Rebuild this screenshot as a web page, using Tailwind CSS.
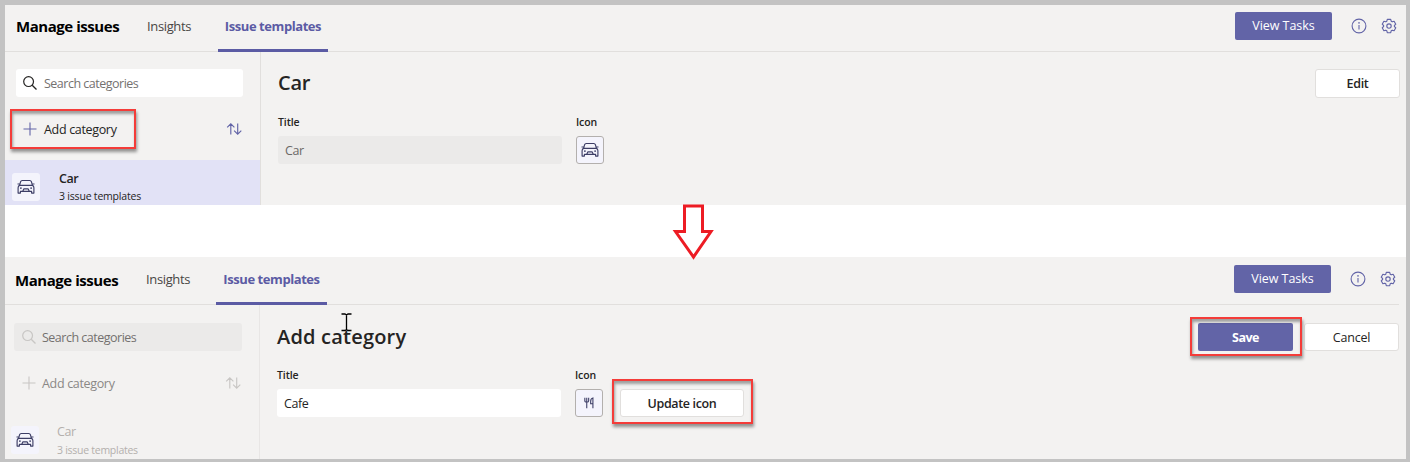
<!DOCTYPE html>
<html lang="en">
<head>
<meta charset="utf-8">
<title>Manage issues</title>
<script src="https://cdn.jsdelivr.net/npm/@tailwindcss/browser@4"></script>
</head>
<body class="relative w-[1410px] h-[462px] overflow-hidden bg-[#c3c3c3] pt-[5px] pl-[5px] font-['Open_Sans',sans-serif] text-[12.5px] text-[#252423] whitespace-nowrap">
<svg class="hidden">
  <symbol id="search" viewBox="0 0 14 14"><circle cx="5.6" cy="5.6" r="4.9" fill="none" stroke="currentColor" stroke-width="1.2"/><path d="M9.2 9.2l4.3 4.3" stroke="currentColor" stroke-width="1.3"/></symbol>
  <symbol id="plus" viewBox="0 0 14 14"><path d="M7 .5v13M.5 7h13" stroke="currentColor" stroke-width="1.1"/></symbol>
  <symbol id="sort" viewBox="0 0 16 12"><path d="M4.8 11.5V1M1.2 4.4L4.8.9l3.6 3.5M11.7.5V11M8.1 7.6l3.6 3.5 3.6-3.5" fill="none" stroke="currentColor" stroke-width="1.15"/></symbol>
  <symbol id="car" viewBox="0 0 18 16"><g fill="none" stroke="currentColor" stroke-width="1.15" stroke-linejoin="round"><path d="M2.6 6.3L3.6 2.7Q4 1.500 5.200 1.500h7.600q1.200 0 1.600 1.200l1 3.600M.5 5h2M15.500 5h2M2.600 6.400h12.800q1.500.6 1.500 2.400v5.300h-2.300v-1.700H3.400v1.700H1.100V8.800q0-1.800 1.500-2.400z"/><path d="M5.800 12.200l1-2.300h4.400l1 2.300"/></g><circle cx="3.900" cy="9.100" r=".9" fill="currentColor"/><circle cx="14.100" cy="9.100" r=".9" fill="currentColor"/></symbol>
  <symbol id="info" viewBox="0 0 16 16"><circle cx="8" cy="8" r="6.900" fill="none" stroke="currentColor" stroke-width="1.100"/><path d="M8 7v4.500" stroke="currentColor" stroke-width="1.100"/><circle cx="8" cy="4.900" r=".8" fill="currentColor"/></symbol>
  <symbol id="gear" viewBox="0 0 16 16"><g fill="none" stroke="currentColor" stroke-width="1.150" stroke-linejoin="round"><path d="M6.300 1.300h3.400l.5 1.900 1 .6 1.900-.5 1.700 2.900-1.400 1.300v1l1.400 1.300-1.700 2.900-1.900-.5-1 .6-.5 1.900H6.300l-.5-1.900-1-.6-1.900.5-1.700-2.900 1.400-1.300v-1L1.200 6.200l1.700-2.900 1.900.5 1-.6z"/><circle cx="8" cy="8" r="2.200"/></g></symbol>
  <symbol id="fork" viewBox="0 0 12 14"><path d="M1 .8v3.400q0 1.800 2.300 1.800t2.300-1.800V.8M3.300.8v12.400M10.700 13.200V.9Q8 1.400 8 4.800v3h2.700" fill="none" stroke="currentColor" stroke-width="1.300"/></symbol>
</svg>

<!-- Category list -->
<section class="w-[1401px] h-[200px] bg-[#f3f2f1] overflow-hidden">
  <header class="h-[47px] mr-[6px] border-b border-[#e1dfdd] flex items-start">
    <h1 class="ml-[11px] w-[131px] leading-[20px] mt-[11px] text-[15px] font-bold tracking-[-0.45px] text-black">Manage issues</h1>
    <div class="w-[71px] leading-[20px] mt-[11px] text-[13px] tracking-[-0.36px] text-[#484644]">Insights</div>
    <div class="h-[47px] w-[110px] border-b-[3px] border-[#5b5ba4] flex justify-center pt-[11px] leading-[20px] text-[13px] font-bold tracking-[-0.43px] text-[#5b5ba4]">Issue templates</div>
    <div class="ml-auto flex items-center mt-[7px]">
      <button class="w-[97px] h-[28px] bg-[#6264a7] text-white font-medium rounded-[2px] tracking-[-0.05px] pt-px">View Tasks</button>
      <svg class="w-4 h-4 ml-[19px] text-[#6264a7]"><use href="#info"/></svg>
      <svg class="w-4 h-4 ml-[14px] mr-[3px] text-[#6264a7]"><use href="#gear"/></svg>
    </div>
  </header>
  <div class="flex h-[153px]">
    <aside class="w-[256px] border-r border-[#e1dfdd]">
      <div class="mt-[17px] ml-[11px] w-[227px] h-[28px] bg-white rounded-[3px] flex items-center pl-[7px] gap-[7px] tracking-[-0.5px] text-[#74716f]"><svg class="w-[14px] h-[14px] text-[#252423]"><use href="#search"/></svg><span class="pt-[3px]">Search categories</span></div>
      <div class="mt-[18px] ml-[18px] mr-[18px] h-[28px] flex items-center"><svg class="w-[14px] h-[14px] text-[#6264a7]"><use href="#plus"/></svg><span class="ml-[7px] pt-[3px] tracking-[-0.33px]">Add category</span><svg class="ml-auto w-4 h-3 text-[#6264a7]"><use href="#sort"/></svg></div>
      <div class="mt-[17px] h-[45px] bg-[#e2e2f6] flex">
        <div class="mt-[13px] ml-[7px] w-[28px] h-[28px] rounded-[3px] bg-[#f4f4fc] flex items-center justify-center text-[#3d3e66]"><svg class="w-[18px] h-[16px]"><use href="#car"/></svg></div>
        <div class="ml-[19px] pt-[10px]"><div class="leading-[18px] font-semibold tracking-[-0.5px]">Car</div><div class="leading-[17px] text-[10.5px] font-medium tracking-[-0.2px]">3 issue templates</div></div>
      </div>
    </aside>
    <main class="flex-1 pl-[17px] pr-[6px]">
      <div class="flex justify-between pt-[17px] h-[61px]"><h2 class="text-[20px] leading-[28px] font-semibold tracking-[-0.3px]">Car</h2><button class="w-[85px] h-[29px] bg-white border border-[#e1dfdd] rounded-[3px] font-semibold tracking-[-0.35px] pt-[2px]">Edit</button></div>
      <div class="flex gap-[14px]">
        <div><div class="text-[10.5px] leading-[18px] font-semibold tracking-[-0.1px]">Title</div><div class="mt-[5px] w-[284px] h-[28px] bg-[#ebeae9] rounded-[3px] px-[7px] leading-[30px] tracking-[-0.4px] text-[#6b6967]">Car</div></div>
        <div><div class="text-[10.5px] leading-[18px] font-semibold tracking-[-0.1px]">Icon</div><div class="mt-[5px] w-[28px] h-[28px] bg-[#f4f4fc] border border-[#b3b0ad] rounded-[3px] flex items-center justify-center text-[#3d3e66]"><svg class="w-[18px] h-[16px]"><use href="#car"/></svg></div></div>
      </div>
    </main>
  </div>
</section>

<div class="w-[1401px] h-[52px] bg-white"></div>

<!-- Add category form -->
<section class="w-[1401px] h-[202px] bg-[#f3f2f1] overflow-hidden">
  <header class="h-[48px] mr-[7px] border-b border-[#e1dfdd] flex items-start">
    <h1 class="ml-[10px] w-[131px] leading-[20px] mt-[13px] text-[15px] font-bold tracking-[-0.45px] text-black">Manage issues</h1>
    <div class="w-[70px] leading-[20px] mt-[12px] text-[13px] tracking-[-0.36px] text-[#484644]">Insights</div>
    <div class="h-[48px] w-[111px] border-b-[3px] border-[#5b5ba4] flex justify-center pt-[12px] leading-[20px] text-[13px] font-bold tracking-[-0.43px] text-[#5b5ba4]">Issue templates</div>
    <div class="ml-auto flex items-center mt-[8px]">
      <button class="w-[97px] h-[28px] bg-[#6264a7] text-white font-medium rounded-[2px] tracking-[-0.05px] pt-px">View Tasks</button>
      <svg class="w-4 h-4 ml-[19px] text-[#6264a7]"><use href="#info"/></svg>
      <svg class="w-4 h-4 ml-[14px] mr-[3px] text-[#6264a7]"><use href="#gear"/></svg>
    </div>
  </header>
  <div class="flex h-[154px]">
    <aside class="w-[255px] border-r border-[#e8e6e5]">
      <div class="mt-[18px] ml-[9px] w-[228px] h-[28px] bg-[#ebeae9] rounded-[3px] flex items-center pl-[8px] gap-[6px] tracking-[-0.5px] text-[#74716f]"><svg class="w-[14px] h-[14px] text-[#c8c6c4]"><use href="#search"/></svg><span class="pt-[3px]">Search categories</span></div>
      <div class="mt-[18px] ml-[17px] mr-[18px] h-[28px] flex items-center text-[#8a8886]"><svg class="w-[14px] h-[14px] text-[#c8c6c4]"><use href="#plus"/></svg><span class="ml-[6px] pt-[3px] tracking-[-0.33px]">Add category</span><svg class="ml-auto w-4 h-3 text-[#c8c6c4]"><use href="#sort"/></svg></div>
      <div class="mt-[16px] h-[45px] flex">
        <div class="mt-[13px] ml-[6px] w-[28px] h-[28px] rounded-[3px] bg-[#f4f4fc] flex items-center justify-center text-[#3d3e66]"><svg class="w-[18px] h-[16px]"><use href="#car"/></svg></div>
        <div class="ml-[18px] pt-[10px] text-[#b3b0ad]"><div class="leading-[18px] tracking-[-0.4px]">Car</div><div class="leading-[18px] text-[10.5px] tracking-[-0.27px]">3 issue templates</div></div>
      </div>
    </aside>
    <main class="flex-1 pl-[17px] pr-[7px]">
      <div class="flex pt-[18px] h-[61px]"><h2 class="text-[20px] leading-[28px] font-semibold tracking-[0.2px]">Add category</h2><button class="ml-auto w-[95px] h-[28px] bg-[#6264a7] text-white rounded-[2px] font-bold tracking-[-0.5px] pt-[3px]">Save</button><button class="ml-[11px] w-[95px] h-[28px] bg-white border border-[#e1dfdd] rounded-[3px] font-medium tracking-[-0.2px] pt-[3px]">Cancel</button></div>
      <div class="flex gap-[14px]">
        <div><div class="text-[10.5px] leading-[18px] font-semibold tracking-[-0.1px]">Title</div><div class="mt-[5px] w-[284px] h-[28px] bg-white rounded-[3px] px-[7px] leading-[30px] tracking-[-0.4px]">Cafe</div></div>
        <div><div class="text-[10.5px] leading-[18px] font-semibold tracking-[-0.1px]">Icon</div><div class="mt-[5px] w-[28px] h-[28px] bg-[#f4f4fc] border border-[#b3b0ad] rounded-[3px] flex items-center justify-center text-[#3d3e66]"><svg class="w-[10px] h-[12px]"><use href="#fork"/></svg></div></div>
        <button class="mt-[23px] ml-[3px] w-[124px] h-[28px] bg-white border border-[#e1dfdd] rounded-[3px] font-semibold tracking-[-0.35px] pt-[3px]">Update icon</button>
      </div>
    </main>
  </div>
</section>

<!-- Callouts drawn over the panels -->
<div class="absolute left-[10px] top-[109px] w-[126px] h-[40px] border-2 border-[#f43c39] shadow-[1px_3px_3px_rgba(0,0,0,0.4),inset_1px_3px_3px_rgba(0,0,0,0.35)]"></div>
<div class="absolute left-[1190px] top-[317px] w-[112px] h-[39px] border-2 border-[#f43c39] shadow-[1px_3px_3px_rgba(0,0,0,0.4),inset_1px_3px_3px_rgba(0,0,0,0.35)]"></div>
<div class="absolute left-[612px] top-[379px] w-[141px] h-[45px] border-2 border-[#f43c39] shadow-[1px_3px_3px_rgba(0,0,0,0.4),inset_1px_3px_3px_rgba(0,0,0,0.35)]"></div>
<svg class="absolute left-[670px] top-[202px] w-[46px] h-[60px]" viewBox="0 0 46 60"><path d="M14.500 4h18v25.500h8.500L23.500 55 5.500 29.500h9z" fill="#fff" stroke="#ed1c24" stroke-width="3"/></svg>
<svg class="absolute left-[340px] top-[312px] w-[13px] h-[20px]" viewBox="0 0 13 20"><path d="M1.500 2h3.500l1.500 1 1.500-1H11.500M6.500 3v14.500M1.500 18.500h3.500l1.500-1 1.500 1h3.500" fill="none" stroke="#000" stroke-width="1.300"/></svg>
</body>
</html>
